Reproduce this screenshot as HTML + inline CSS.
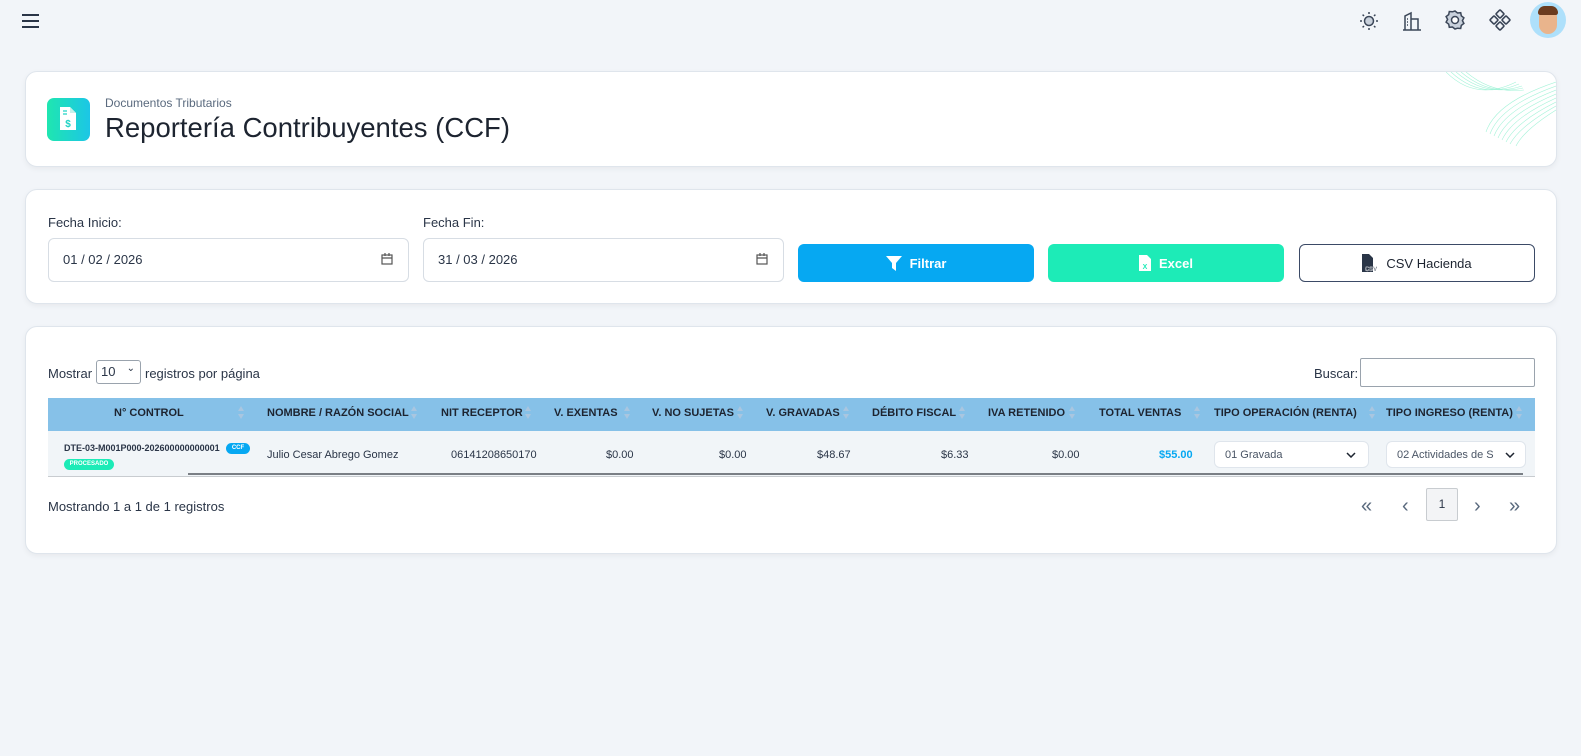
<!DOCTYPE html>
<html><head><meta charset="utf-8"><style>
*{box-sizing:border-box;margin:0;padding:0}
body{width:1581px;height:756px;background:#f2f5f9;font-family:"Liberation Sans",sans-serif;color:#2a3547;position:relative;overflow:hidden}
.a{position:absolute}
.card{position:absolute;background:#fff;border-radius:12px;border:1px solid #dfe5ec;box-shadow:0 2px 6px rgba(0,0,0,.05)}
.th{position:absolute;top:407px;font-size:11px;font-weight:bold;color:#1d2430;white-space:nowrap}
.ar{position:absolute;top:405px;width:7px;height:16px}
.ar:before{content:"";position:absolute;top:1px;left:0;border:3.5px solid transparent;border-bottom:5px solid #a9c6e0;border-top:0}
.ar:after{content:"";position:absolute;top:9px;left:0;border:3.5px solid transparent;border-top:5px solid #a9c6e0;border-bottom:0}
.td{position:absolute;top:449px;font-size:11px;color:#2a3547;white-space:nowrap}
.btn{position:absolute;top:244px;height:38px;width:236px;border-radius:6px;font-size:13px;font-weight:bold;display:flex;align-items:center;justify-content:center;gap:8px}
.inp{position:absolute;top:238px;height:44px;width:361px;border:1px solid #d7dde4;border-radius:6px;font-size:13px;padding:13px 14px;color:#2a3547}
.sel{position:absolute;top:441px;height:27px;border:1px solid #dfe5ec;border-radius:6px;background:#fff;font-size:11px;color:#4a5565;padding:7px 10px}
.pg{position:absolute;top:495px;font-size:20px;color:#5a6a7e}
</style></head><body>
<div class="a" style="left:22px;top:14px;width:17px;height:2px;background:#2a3547;box-shadow:0 6px 0 #2a3547,0 12px 0 #2a3547"></div>
<svg class="a" style="left:1358px;top:10px" width="22" height="22" viewBox="0 0 22 22" fill="none" stroke="#3b4658" stroke-width="1.5"><circle cx="11" cy="11" r="4.5" fill="#c9d1dc"/><path d="M11 2v2M11 18v2M2 11h2M18 11h2M4.6 4.6l1.4 1.4M16 16l1.4 1.4M4.6 17.4L6 16M16 6l1.4-1.4"/></svg>
<svg class="a" style="left:1401px;top:10px" width="22" height="22" viewBox="0 0 22 22" fill="none" stroke="#3b4658" stroke-width="1.5"><path d="M2 20h18M4 20V6l6-3v17M10 9h7v11"/><path d="M6 9h1M6 12h1M6 15h1" /></svg>
<svg class="a" style="left:1444px;top:9px" width="22" height="22" viewBox="0 0 22 22" fill="#c9d1dc" stroke="#3b4658" stroke-width="1.5"><path d="M11 2l2.5 2 3.2-.3.6 3.1 2.6 2-1.5 2.8 1.5 2.8-2.6 2-.6 3.1-3.2-.3L11 20l-2.5-2-3.2.3-.6-3.1-2.6-2 1.5-2.8-1.5-2.8 2.6-2 .6-3.1 3.2.3z"/><circle cx="11" cy="11" r="3.5" fill="#fff"/></svg>
<svg class="a" style="left:1489px;top:9px" width="22" height="22" viewBox="0 0 22 22" fill="none" stroke="#3b4658" stroke-width="1.6"><rect x="8" y="2" width="6" height="6" rx="1" transform="rotate(45 11 5)"/><rect x="8" y="14" width="6" height="6" rx="1" transform="rotate(45 11 17)"/><rect x="2" y="8" width="6" height="6" rx="1" transform="rotate(45 5 11)"/><rect x="14" y="8" width="6" height="6" rx="1" transform="rotate(45 17 11)"/></svg>
<div class="a" style="left:1530px;top:2px;width:36px;height:36px;border-radius:50%;background:#aee0fb;overflow:hidden"><div class="a" style="left:9px;top:6px;width:18px;height:26px;border-radius:9px;background:#e9b48c"></div><div class="a" style="left:8px;top:4px;width:20px;height:9px;border-radius:9px 9px 3px 3px;background:#6b3b1f"></div></div>

<div class="card" style="left:25px;top:71px;width:1532px;height:96px;overflow:hidden">
<svg class="a" style="right:0;top:0" width="110" height="80" viewBox="0 0 110 80" fill="none" stroke="#8ff0cf" stroke-width=".6" opacity=".8"><path d="M0 0q30 30 70 10M5 0q30 28 68 12M10 0q30 26 66 14M15 0q28 24 62 16M20 0q26 22 58 18"/><path d="M110 10q-60 20-70 50M110 14q-56 20-66 48M110 18q-52 20-62 46M110 22q-48 20-58 44M110 26q-44 20-54 42M110 30q-40 20-50 40M110 34q-36 20-46 38M110 38q-32 20-40 36"/></svg>
</div>
<div class="a" style="left:47px;top:98px;width:43px;height:43px;border-radius:7px;background:linear-gradient(90deg,#1fe6b0,#1cc6e6)"></div>
<svg class="a" style="left:58px;top:106px" width="20" height="26" viewBox="0 0 20 26"><path d="M2 1h10l6 6v17H2z" fill="#fff"/><path d="M12 1v6h6" fill="#c6f2ea"/><path d="M5 5h4M5 8h4" stroke="#20d3c5" stroke-width="1.2"/><text x="10" y="21" font-size="10" font-weight="bold" fill="#20d3c5" text-anchor="middle" font-family="Liberation Sans">$</text></svg>
<div class="a" style="left:105px;top:96px;font-size:12px;color:#5a6a7e">Documentos Tributarios</div>
<div class="a" style="left:105px;top:112px;font-size:27.5px;color:#1d2430">Reportería Contribuyentes (CCF)</div>

<div class="card" style="left:25px;top:189px;width:1532px;height:115px"></div>
<div class="a" style="left:48px;top:215px;font-size:13px">Fecha Inicio:</div>
<div class="a" style="left:423px;top:215px;font-size:13px">Fecha Fin:</div>
<div class="inp" style="left:48px">01 / 02 / 2026</div>
<div class="inp" style="left:423px">31 / 03 / 2026</div>
<svg class="a" style="left:381px;top:253px" width="12" height="12" viewBox="0 0 12 12" fill="none" stroke="#555" stroke-width="1.2"><rect x="1" y="2" width="10" height="9"/><path d="M1 5h10M4 0v3M8 0v3"/></svg>
<svg class="a" style="left:756px;top:253px" width="12" height="12" viewBox="0 0 12 12" fill="none" stroke="#555" stroke-width="1.2"><rect x="1" y="2" width="10" height="9"/><path d="M1 5h10M4 0v3M8 0v3"/></svg>
<div class="btn" style="left:798px;background:#06a8f2;color:#fff"><svg width="16" height="15" viewBox="0 0 16 15"><path d="M0 0h16L10 7v8l-4-3V7z" fill="#fff"/></svg>Filtrar</div>
<div class="btn" style="left:1048px;background:#1debb7;color:#fff"><svg width="12" height="16" viewBox="0 0 12 16"><path d="M0 0h8l4 4v12H0z" fill="#fff"/><text x="6" y="14" font-size="7" fill="#1debb7" text-anchor="middle" font-family="Liberation Sans">X</text></svg>Excel</div>
<div class="btn" style="left:1299px;border:1px solid #3b4a66;color:#1d2430;font-weight:normal"><svg width="16" height="18" viewBox="0 0 16 18"><path d="M0 0h7l4 4v14H0z" fill="#2a3547"/><text x="9" y="17" font-size="6" font-weight="bold" fill="#2a3547" text-anchor="middle" font-family="Liberation Sans" stroke="#fff" stroke-width=".3">CSV</text></svg>CSV Hacienda</div>

<div class="card" style="left:25px;top:326px;width:1532px;height:228px"></div>
<div class="a" style="left:48px;top:366px;font-size:13px">Mostrar</div>
<div class="a" style="left:96px;top:360px;width:45px;height:24px;border:1px solid #9aa3ad;border-radius:3px;font-size:13px;padding:3px 4px">10 <span style="position:absolute;right:5px;top:2px;font-size:10px">⌄</span></div>
<div class="a" style="left:145px;top:366px;font-size:13px">registros por página</div>
<div class="a" style="left:1314px;top:366px;font-size:13px">Buscar:</div>
<div class="a" style="left:1360px;top:358px;width:175px;height:29px;border:1px solid #9aa3ad;border-radius:2px"></div>

<div class="a" style="left:48px;top:398px;width:1487px;height:33px;background:#86c1e8"></div>
<div class="a" style="left:48px;top:431px;width:1487px;height:46px;background:#f1f5f8;border-bottom:1px solid #c8ccd0"></div>
<div class="a" style="left:188px;top:473px;width:1335px;height:2px;background:#7a7f85"></div>

<div class="th" style="left:114px">N° CONTROL</div><div class="ar" style="left:238px"></div>
<div class="th" style="left:267px">NOMBRE / RAZÓN SOCIAL</div><div class="ar" style="left:411px"></div>
<div class="th" style="left:441px">NIT RECEPTOR</div><div class="ar" style="left:525px"></div>
<div class="th" style="left:554px">V. EXENTAS</div><div class="ar" style="left:624px"></div>
<div class="th" style="left:652px">V. NO SUJETAS</div><div class="ar" style="left:737px"></div>
<div class="th" style="left:766px">V. GRAVADAS</div><div class="ar" style="left:843px"></div>
<div class="th" style="left:872px">DÉBITO FISCAL</div><div class="ar" style="left:959px"></div>
<div class="th" style="left:988px">IVA RETENIDO</div><div class="ar" style="left:1069px"></div>
<div class="th" style="left:1099px">TOTAL VENTAS</div><div class="ar" style="left:1194px"></div>
<div class="th" style="left:1214px">TIPO OPERACIÓN (RENTA)</div><div class="ar" style="left:1369px"></div>
<div class="th" style="left:1386px">TIPO INGRESO (RENTA)</div><div class="ar" style="left:1516px"></div>

<div class="a" style="left:64px;top:443px;font-size:9px;font-weight:bold;color:#2a3547">DTE-03-M001P000-202600000000001</div>
<div class="a" style="left:226px;top:443px;width:24px;height:11px;border-radius:6px;background:#06a8f2;color:#fff;font-size:6px;font-weight:bold;text-align:center;line-height:11px">CCF</div>
<div class="a" style="left:64px;top:459px;width:50px;height:11px;border-radius:6px;background:#1debb7;color:#fff;font-size:6px;font-weight:bold;text-align:center;line-height:11px">PROCESADO</div>
<div class="td" style="left:267px">Julio Cesar Abrego Gomez</div>
<div class="td" style="left:451px">06141208650170</div>
<div class="td" style="left:606px">$0.00</div>
<div class="td" style="left:719px">$0.00</div>
<div class="td" style="left:817px">$48.67</div>
<div class="td" style="left:941px">$6.33</div>
<div class="td" style="left:1052px">$0.00</div>
<div class="td" style="left:1159px;color:#06a8f2;font-weight:bold">$55.00</div>
<div class="sel" style="left:1214px;width:155px">01 Gravada<svg class="a" style="right:12px;top:10px" width="10" height="6" viewBox="0 0 10 6" fill="none" stroke="#1d2430" stroke-width="1.5"><path d="M1 1l4 4 4-4"/></svg></div>
<div class="sel" style="left:1386px;width:140px">02 Actividades de S<svg class="a" style="right:10px;top:10px" width="10" height="6" viewBox="0 0 10 6" fill="none" stroke="#1d2430" stroke-width="1.5"><path d="M1 1l4 4 4-4"/></svg></div>

<div class="a" style="left:48px;top:499px;font-size:13px">Mostrando 1 a 1 de 1 registros</div>
<div class="pg" style="left:1361px">«</div>
<div class="pg" style="left:1402px">‹</div>
<div class="a" style="left:1426px;top:488px;width:32px;height:33px;border:1px solid #c8ccd0;background:#f3f4f6;border-radius:2px;font-size:12px;text-align:center;line-height:31px">1</div>
<div class="pg" style="left:1474px">›</div>
<div class="pg" style="left:1509px">»</div>
</body></html>
